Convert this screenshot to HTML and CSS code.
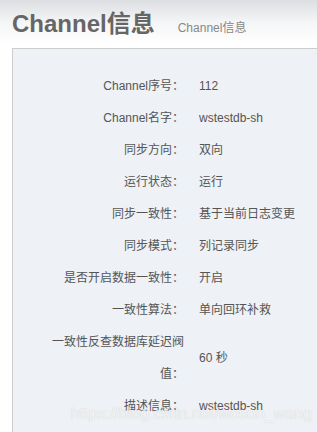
FILE: index.html
```html
<!DOCTYPE html>
<html lang="zh-CN">

<head>
    <meta charset="UTF-8" />
    <meta name="viewport" content="width=device-width, initial-scale=1" />
    <title>Channel信息</title>
    <link rel="stylesheet" href="styles.css">
</head>

<body>
    <div class="cabecalho">
        <h1 class="titulo">Channel信息</h1>
        <span class="subtitulo">Channel信息</span>
    </div>

    <div class="painel">
        <div class="linha">
            <div class="rotulo">Channel序号：</div>
            <div class="valor">112</div>
        </div>
        <div class="linha">
            <div class="rotulo">Channel名字：</div>
            <div class="valor">wstestdb-sh</div>
        </div>
        <div class="linha">
            <div class="rotulo">同步方向：</div>
            <div class="valor">双向</div>
        </div>
        <div class="linha">
            <div class="rotulo">运行状态：</div>
            <div class="valor">运行</div>
        </div>
        <div class="linha">
            <div class="rotulo">同步一致性：</div>
            <div class="valor">基于当前日志变更</div>
        </div>
        <div class="linha">
            <div class="rotulo">同步模式：</div>
            <div class="valor">列记录同步</div>
        </div>
        <div class="linha">
            <div class="rotulo">是否开启数据一致性：</div>
            <div class="valor">开启</div>
        </div>
        <div class="linha">
            <div class="rotulo">一致性算法：</div>
            <div class="valor">单向回环补救</div>
        </div>
        <div class="linha">
            <div class="rotulo">一致性反查数据库延迟阀值：</div>
            <div class="valor">60 秒</div>
        </div>
        <div class="linha">
            <div class="rotulo">描述信息：</div>
            <div class="valor">wstestdb-sh</div>
        </div>

        <!-- marca d'agua do print original -->
        <div class="marca">https://blog.csdn.net/woson_wang</div>
    </div>
</body>

</html>
```

FILE: styles.css
```css
body {
    margin: 0;
    font-family: "Liberation Sans", "Noto Sans CJK SC", sans-serif;
    background: #fff;
    overflow: hidden;
}

.cabecalho {
    display: flex;
    align-items: baseline;
    height: 48px;
    padding-left: 12px;
    box-sizing: border-box;
    background: linear-gradient(to bottom, #dcdee1 0px, #f4f5f6 22px, #ffffff 44px);
}

.titulo {
    margin: 0;
    padding-top: 10px;
    font-size: 24px;
    line-height: 28px;
    font-weight: bold;
    color: #666;
}

.subtitulo {
    margin-left: 23px;
    font-size: 12px;
    color: #888;
}

.painel {
    position: relative;
    margin-left: 12px;
    padding: 21px 0 10px;
    background-color: #eef1f5;
    border-top: 1px solid #ccc;
    border-left: 1px solid #ccc;
}

.linha {
    display: flex;
    align-items: center;
    font-size: 12px;
    line-height: 32px;
    color: #555;
}

.rotulo {
    width: 140px;
    margin-left: 31px;
    text-align: right;
}

.valor {
    margin-left: 15px;
}

.marca {
    position: absolute;
    left: 58px;
    top: 356px;
    font-size: 16px;
    color: rgba(255, 255, 255, 0.75);
    text-shadow: 0 0 1px rgba(120, 120, 120, 0.35);
    white-space: nowrap;
}
```
